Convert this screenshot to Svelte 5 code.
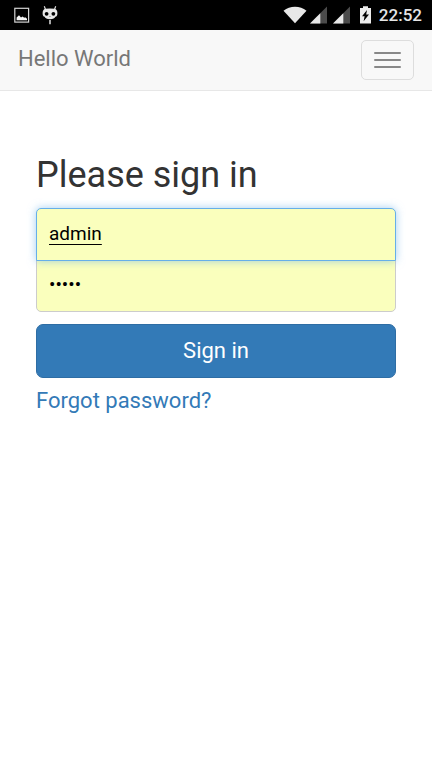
<script>
  let username = $state('admin');
  let password = $state('admin');
  let menuOpen = $state(false);
</script>

<div class="screen">
  <div class="status">
    <div class="group left">
      <svg width="16" height="16" viewBox="0 0 16 16" aria-hidden="true">
        <rect x=".8" y="1.300" width="13.800" height="13.800" fill="none" stroke="#d4d4d4" stroke-width="1.200" />
        <path d="M2.600 13.200V10.600L5 8.200l2 2.200 1.600-1 1.600 1.400 1-.6 1.800 1.500v1.500z" fill="#f4f4f4" />
      </svg>
      <svg width="16" height="20" viewBox="0 0 16 20" aria-hidden="true">
        <path d="M2.300 1.200l1.200 3.300M13.700 1.200l-1.200 3.300" stroke="#d8d8d8" stroke-width="1.200" />
        <path d="M3.400 3.800Q8 3 12.600 3.800Q15.400 4.600 15.400 8.200Q15.400 11.400 13.300 11.800Q12.600 14.200 8 14.200Q3.400 14.200 2.700 11.800Q.6 11.400.6 8.200Q.6 4.600 3.400 3.800z" fill="#e8e8e8" />
        <circle cx="4.600" cy="8.800" r="1.900" fill="#000" />
        <circle cx="11.400" cy="8.800" r="1.900" fill="#000" />
        <path d="M7.300 11.200h1.400L8 12z" fill="#000" />
        <path d="M8 15v4.200" stroke="#e0e0e0" stroke-width="1.500" />
      </svg>
    </div>
    <div class="group right">
      <svg width="24" height="18" viewBox="0 0 24 18" aria-hidden="true">
        <path d="M.5 4.700Q5.500 .8 12 .8T23.500 4.700L12 17.200z" fill="#e8e8e8" />
      </svg>
      <svg width="17" height="18" viewBox="0 0 17 18" aria-hidden="true">
        <path d="M0 17.500L17 .5v17z" fill="#4b4b4b" />
        <path d="M0 17.500L10.300 7.200v10.300z" fill="#e8e8e8" />
      </svg>
      <svg class="signal" width="17" height="18" viewBox="0 0 17 18" aria-hidden="true">
        <path d="M0 17.500L17 .5v17z" fill="#4b4b4b" />
        <path d="M0 17.500L10.300 7.200v10.300z" fill="#e8e8e8" />
      </svg>
      <svg class="battery" width="11" height="18" viewBox="0 0 11 18" aria-hidden="true">
        <path d="M3 .3h5v1.700h3v15.500H0V2h3z" fill="#ececec" />
        <path d="M7 4L2 10.300h2.600l-1 5L9 8.600H6.200z" fill="#000" />
      </svg>
      <span class="time">22:52</span>
    </div>
  </div>

  <nav class="navbar">
    <a class="brand" href="#home">Hello World</a>
    <button
      class="toggle"
      type="button"
      aria-label="Toggle navigation"
      aria-expanded={menuOpen}
      onclick={() => (menuOpen = !menuOpen)}
    >
      <span class="bar"></span>
      <span class="bar"></span>
      <span class="bar"></span>
    </button>
  </nav>

  <main>
    <form onsubmit={(e) => e.preventDefault()}>
      <h2>Please sign in</h2>
      <input class="field user" type="text" aria-label="Username" bind:value={username} />
      <input class="field pass" type="password" aria-label="Password" bind:value={password} />
      <button class="submit" type="submit">Sign in</button>
      <a class="forgot" href="#forgot">Forgot password?</a>
    </form>
  </main>
</div>

<style>
  :global(body) {
    margin: 0;
    background: #fff;
  }

  .screen,
  .screen * {
    box-sizing: border-box;
  }

  .screen {
    font-family: Roboto, 'Liberation Sans', sans-serif;
    font-size: 22px;
    color: #333;
  }

  .status {
    display: flex;
    align-items: center;
    justify-content: space-between;
    height: 30px;
    padding: 0 10px 0 14px;
    background: #000;
  }

  .group {
    display: flex;
    align-items: center;
  }

  .left {
    gap: 12px;
  }

  .right {
    gap: 3px;
  }

  .signal {
    margin-left: 3px;
  }

  .battery {
    margin: 0 5px 0 7px;
  }

  .time {
    font-size: 17px;
    line-height: 30px;
    font-weight: 500;
    color: #e6e6e6;
  }

  .navbar {
    display: flex;
    align-items: center;
    justify-content: space-between;
    height: 61px;
    padding: 0 18px;
    background: #f8f8f8;
    border-bottom: 1px solid #e7e7e7;
  }

  .brand {
    padding-bottom: 2px;
    color: #777;
    line-height: 24px;
    text-decoration: none;
  }

  .toggle {
    display: flex;
    flex-direction: column;
    align-items: center;
    justify-content: center;
    gap: 5px;
    width: 53px;
    height: 40px;
    padding: 0;
    background: transparent;
    border: 1px solid #ddd;
    border-radius: 5px;
  }

  .bar {
    width: 27px;
    height: 2px;
    border-radius: 1px;
    background: #888;
  }

  main {
    padding: 62px 36px;
  }

  form {
    display: flex;
    flex-direction: column;
  }

  h2 {
    margin: 0 0 10px;
    font-size: 36px;
    line-height: 45px;
    font-weight: 400;
  }

  .field {
    position: relative;
    width: 100%;
    height: 53px;
    margin: 0;
    padding: 0 12px 2px;
    font: inherit;
    font-size: 19px;
    color: #000;
    background: #faffbd;
    border: 1px solid #ccc;
    outline: none;
  }

  .user {
    z-index: 1;
    border-color: #66afe9;
    border-radius: 5px 5px 0 0;
    box-shadow: 0 0 9px rgba(102, 175, 233, 0.6);
    text-decoration: underline;
    text-decoration-thickness: 1px;
    text-underline-offset: 4px;
  }

  .pass {
    margin: -2px 0 12px;
    border-radius: 0 0 5px 5px;
  }

  .submit {
    width: 100%;
    height: 54px;
    padding: 0 0 2px;
    font: inherit;
    color: #fff;
    background: #337ab7;
    border: 1px solid #2e6da4;
    border-radius: 7px;
  }

  .forgot {
    align-self: flex-start;
    margin-top: 8px;
    line-height: 30px;
    color: #337ab7;
    text-decoration: none;
  }
</style>
